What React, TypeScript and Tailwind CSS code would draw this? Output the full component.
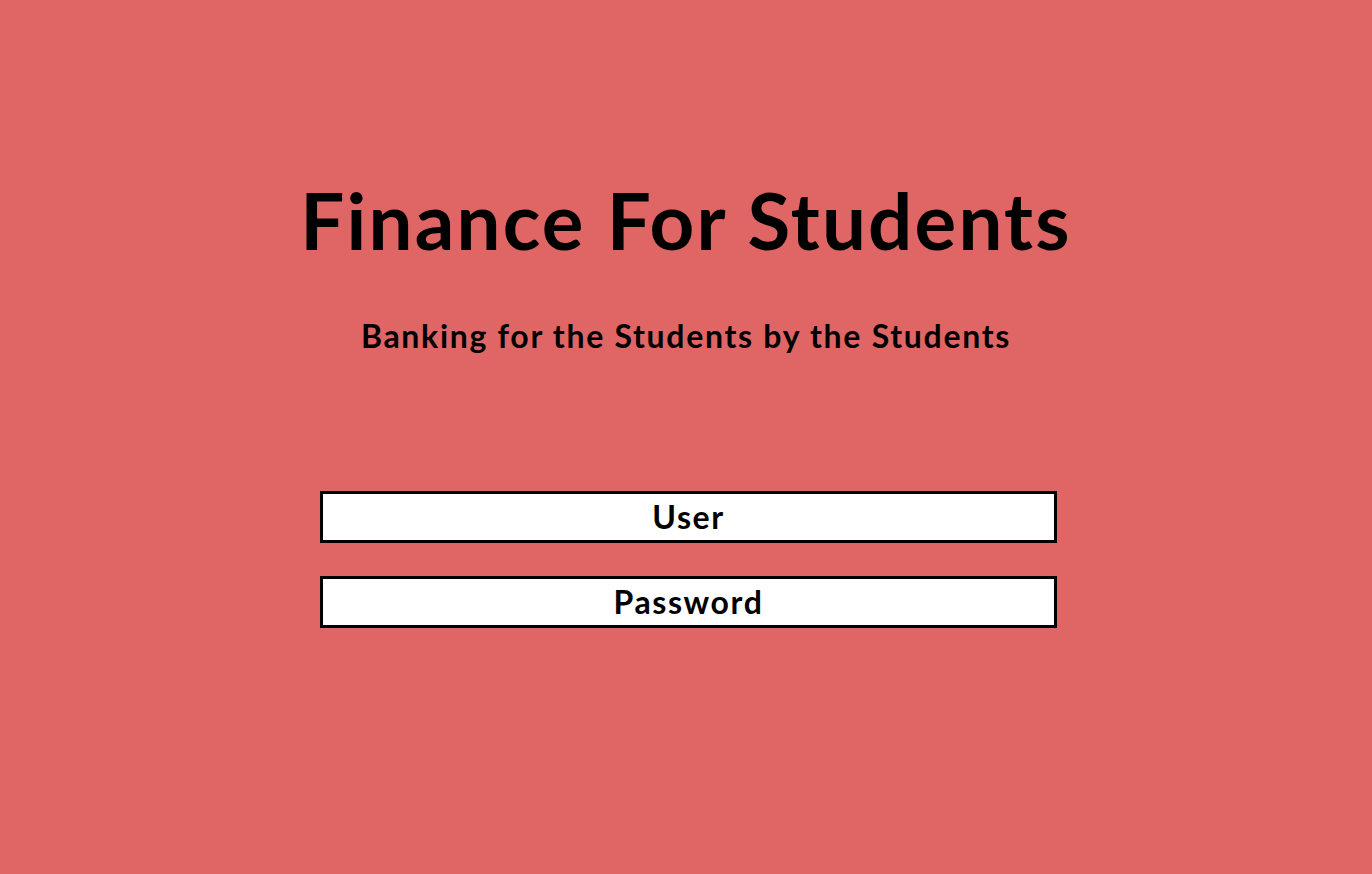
export default function App() {
  return (
    <div className="min-h-[874px] w-full bg-[#e06666] flex flex-col items-center font-['Lato',sans-serif] text-black">
      <h1 className="mt-[176px] h-[88px] text-[78px] leading-[88px] font-bold tracking-[2.2px]">Finance For Students</h1>
      <p className="mt-[52px] h-[40px] text-[32px] leading-[40px] font-bold tracking-[1.7px]">Banking for the Students by the Students</p>
      <div className="mt-[135px] ml-[5px] flex flex-col gap-[33px] w-[737px]">
        <div className="h-[52px] bg-white border-[3px] border-black flex items-center justify-center text-[32px] font-bold tracking-[1.6px]">User</div>
        <div className="h-[52px] bg-white border-[3px] border-black flex items-center justify-center text-[32px] font-bold tracking-[1.6px]">Password</div>
      </div>
    </div>
  );
}
